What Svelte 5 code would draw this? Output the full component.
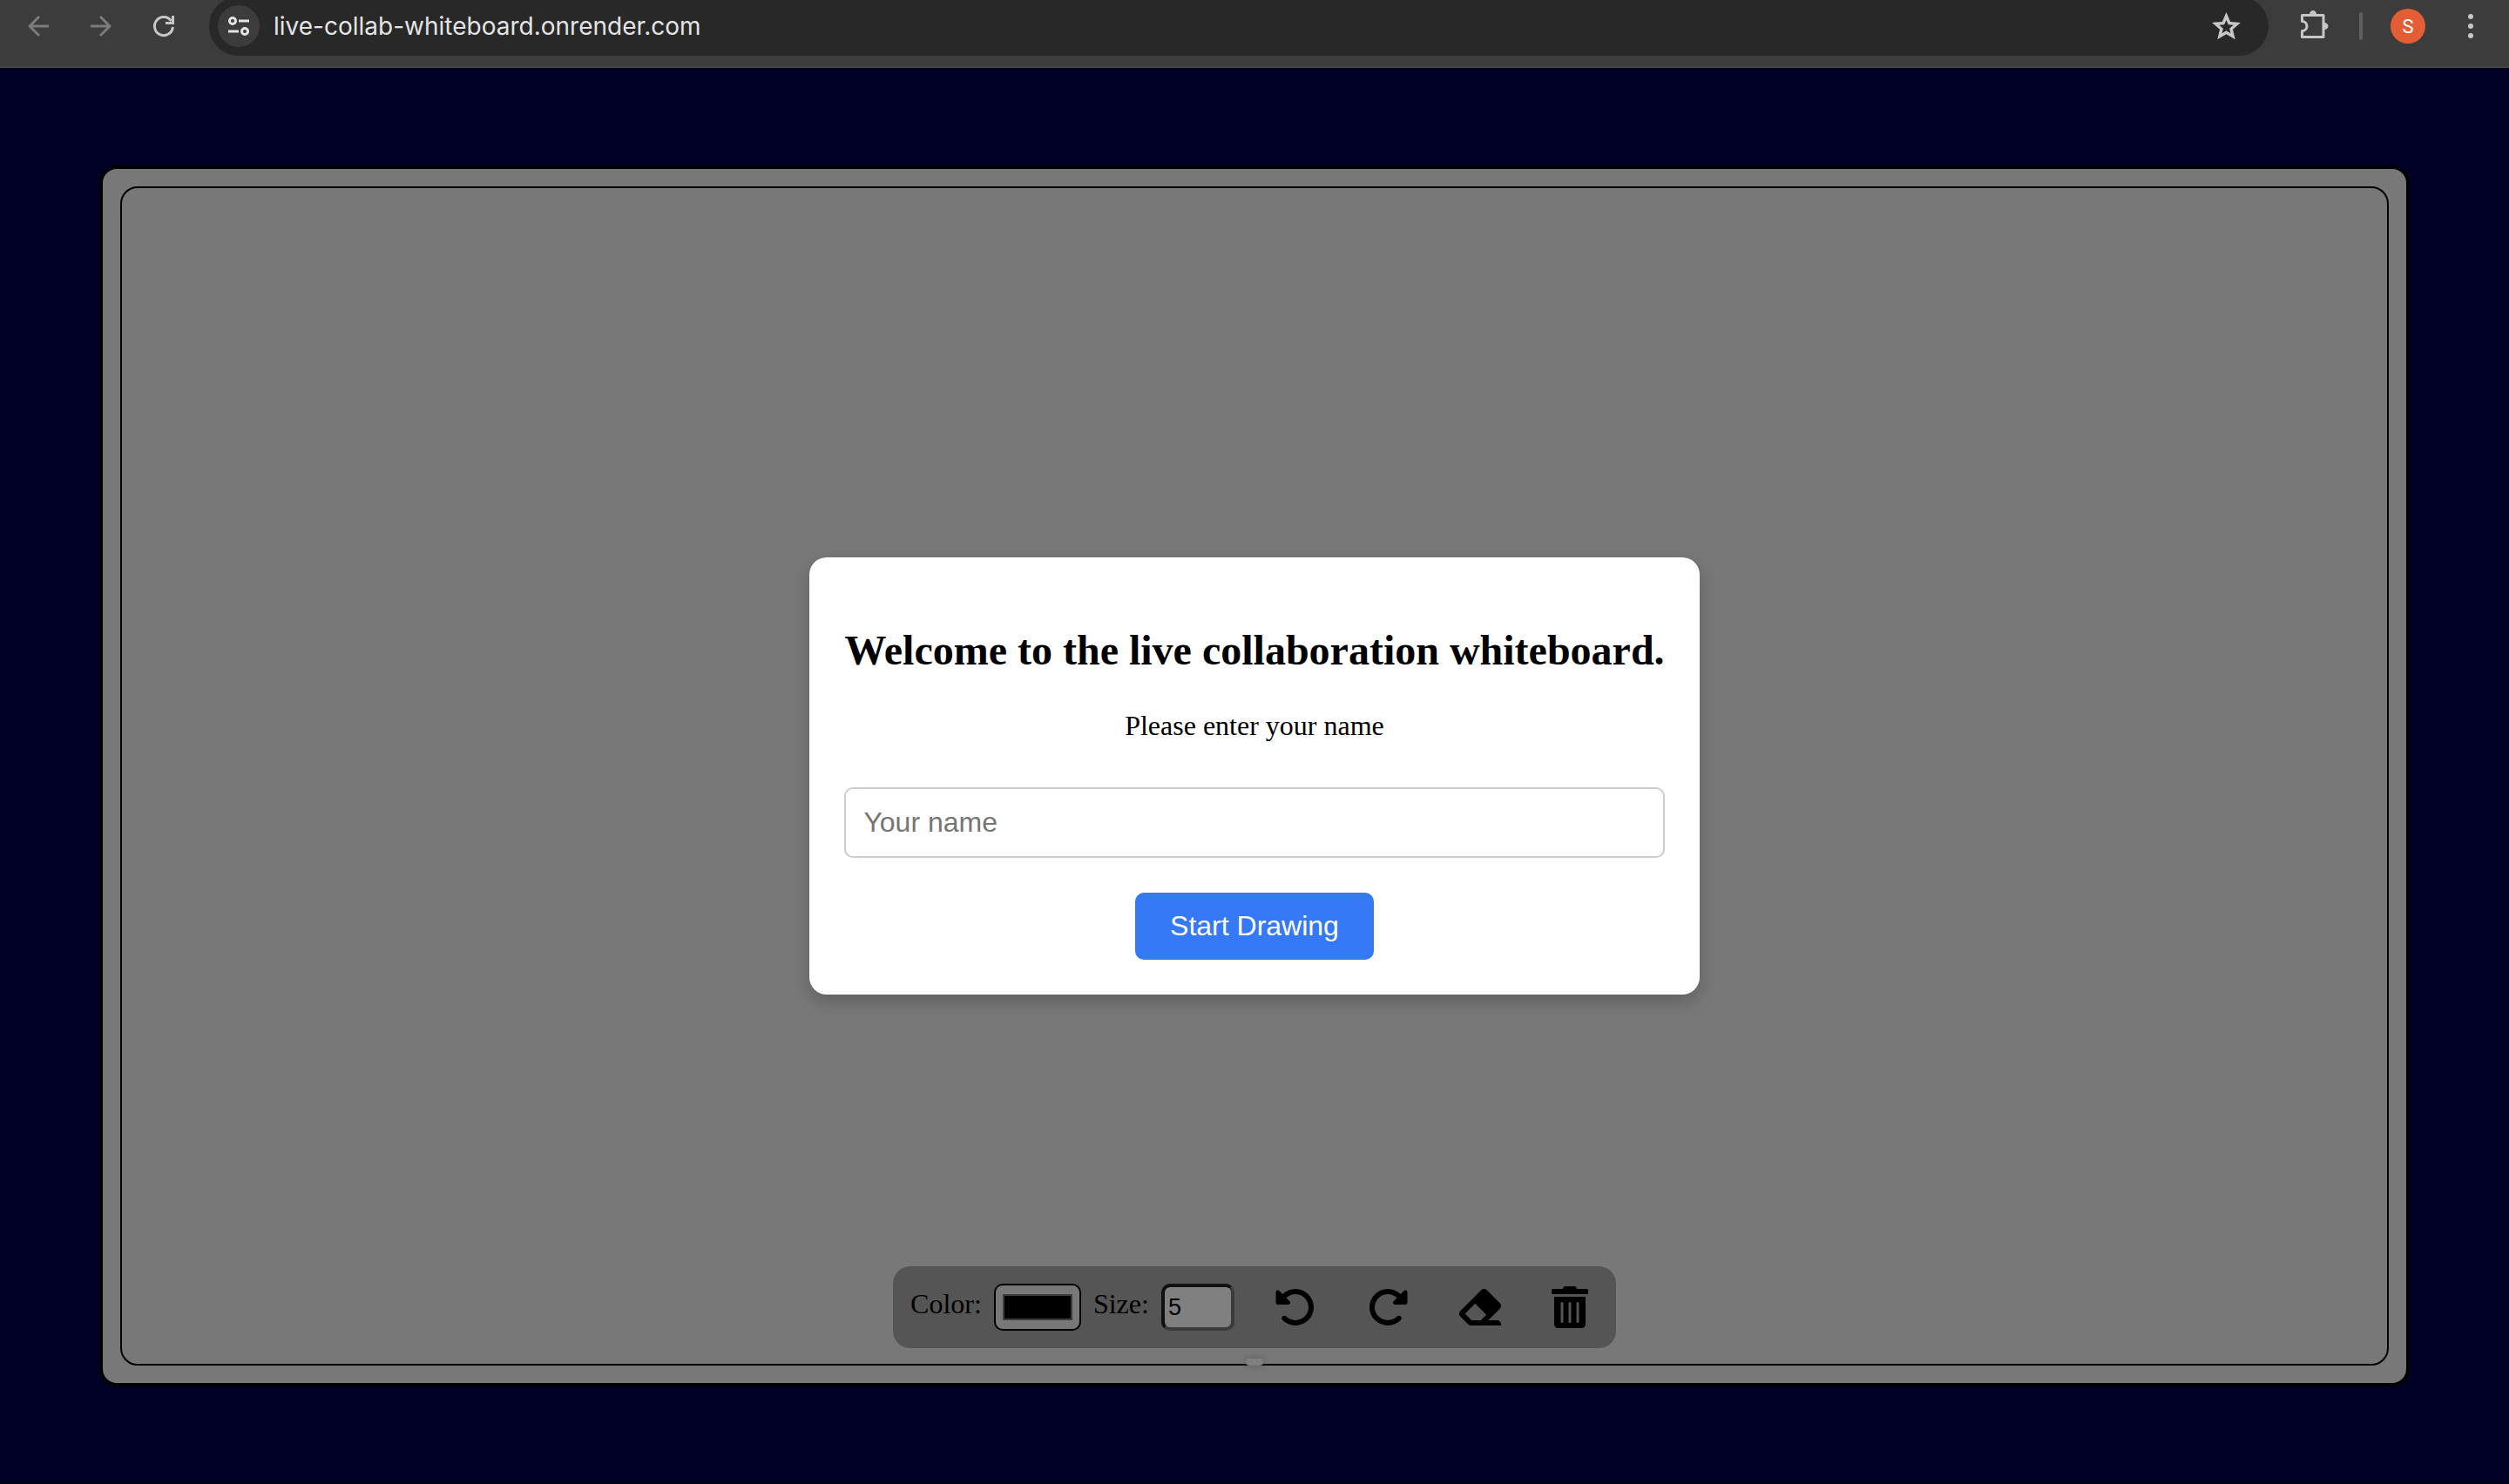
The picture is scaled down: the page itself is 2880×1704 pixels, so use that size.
<script lang="ts">
  let name = $state('');
  let color = $state('#000000');
  let size = $state(5);
</script>

<div class="window">
  <header class="chrome">
    <nav class="nav" aria-label="Browser navigation">
      <button class="tool dim" aria-label="Back">
        <svg viewBox="0 0 24 24"><path d="M24 12H2M13 1L2 12l11 11" /></svg>
      </button>
      <button class="tool dim" aria-label="Forward">
        <svg viewBox="0 0 24 24"><path d="M0 12h22M11 1l11 11-11 11" /></svg>
      </button>
      <button class="tool" aria-label="Reload">
        <svg viewBox="0 0 24 24"><path d="M22.400 13A10.500 10.500 0 1 1 20.500 6" /><path class="solid" d="M24 0v10H14V7h7V0z" /></svg>
      </button>
    </nav>
    <div class="address">
      <button class="site" aria-label="Site information">
        <svg viewBox="0 0 24 22"><circle cx="5" cy="5" r="3.500" /><path d="M12 5h12M0 17h12" /><circle cx="19" cy="17" r="3.500" /></svg>
      </button>
      <input class="url" aria-label="Address" value="live-collab-whiteboard.onrender.com" />
      <button class="star" aria-label="Bookmark">
        <svg viewBox="2 2 20 20"><path class="solid" fill-rule="evenodd" d="M22 9.240l-7.190-.620L12 2 9.190 8.630 2 9.240l5.460 4.730L5.820 21 12 17.270 18.180 21l-1.630-7.030L22 9.240zM12 14.900l-3 1.800.8-3.400-2.700-2.300 3.500-.300L12 7.400l1.400 3.300 3.500.300-2.700 2.300.8 3.400z" /></svg>
      </button>
    </div>
    <button class="puzzle" aria-label="Extensions">
      <svg viewBox="0 0 34 34"><path d="M2.500 4.500h24.500v25H2.500v-7a5.500 5.500 0 0 0 0-11z" /><path class="solid" d="M11 3.500a4 4.500 0 0 1 8 0zM28 13a4.500 4 0 0 1 0 8z" /></svg>
    </button>
    <span class="divider"></span>
    <button class="avatar" aria-label="Profile">S</button>
    <button class="more" aria-label="Menu">
      <svg viewBox="0 0 6 28"><circle cx="3" cy="3" r="3" /><circle cx="3" cy="14" r="3" /><circle cx="3" cy="25" r="3" /></svg>
    </button>
  </header>

  <main class="page">
    <section class="board">
      <div class="canvas">
        <div class="toolbar">
          <label for="color">Color:</label>
          <input id="color" class="color" type="color" bind:value={color} />
          <label for="size">Size:</label>
          <input id="size" class="size" type="number" min="1" bind:value={size} />
          <div class="actions">
            <button aria-label="Undo">
              <svg viewBox="0 0 512 512"><path d="M48.500 224H40c-13.300 0-24-10.700-24-24V72c0-9.700 5.800-18.500 14.800-22.200s19.300-1.700 26.200 5.200L98.600 96.600c87.600-86.500 228.700-86.200 315.800 1c87.500 87.500 87.500 229.300 0 316.800s-229.300 87.500-316.800 0c-12.500-12.500-12.500-32.800 0-45.300s32.800-12.500 45.300 0c62.500 62.500 163.800 62.500 226.300 0s62.500-163.800 0-226.300c-62.200-62.200-162.700-62.500-225.300-1L185 183c6.900 6.900 8.900 17.200 5.200 26.200s-12.500 14.800-22.200 14.800H48.500z" /></svg>
            </button>
            <button aria-label="Redo">
              <svg viewBox="0 0 512 512"><path d="M463.500 224H472c13.300 0 24-10.700 24-24V72c0-9.700-5.800-18.500-14.800-22.200s-19.300-1.700-26.200 5.200L413.400 96.600c-87.600-86.500-228.700-86.200-315.800 1c-87.500 87.500-87.500 229.300 0 316.800s229.300 87.500 316.800 0c12.500-12.500 12.500-32.800 0-45.300s-32.800-12.500-45.300 0c-62.500 62.500-163.800 62.500-226.300 0s-62.500-163.800 0-226.300c62.200-62.200 162.700-62.500 225.300-1L327 183c-6.900 6.900-8.900 17.200-5.200 26.200s12.500 14.800 22.200 14.800H463.500z" /></svg>
            </button>
            <button aria-label="Eraser">
              <svg viewBox="0 0 512 512"><path d="M497.941 273.941c18.745-18.745 18.745-49.137 0-67.882l-160-160c-18.745-18.745-49.136-18.746-67.883 0l-256 256c-18.745 18.745-18.745 49.137 0 67.882l96 96A48.004 48.004 0 0 0 144 480h362a6 6 0 0 0 6-6v-10a48 48 0 0 0-48-48H355.883l142.058-142.059zm-302.627-62.627l137.373 137.373L265.373 416H150.628l-80-80 124.686-124.686z" /></svg>
            </button>
            <button aria-label="Clear board">
              <svg class="narrow" viewBox="0 0 448 512"><path d="M32 464a48 48 0 0 0 48 48h288a48 48 0 0 0 48-48V128H32zm272-256a16 16 0 0 1 32 0v224a16 16 0 0 1-32 0zm-96 0a16 16 0 0 1 32 0v224a16 16 0 0 1-32 0zm-96 0a16 16 0 0 1 32 0v224a16 16 0 0 1-32 0zM432 32H312l-9.400-18.700A24 24 0 0 0 281.100 0H166.800a23.720 23.720 0 0 0-21.400 13.300L136 32H16A16 16 0 0 0 0 48v32a16 16 0 0 0 16 16h416a16 16 0 0 0 16-16V48a16 16 0 0 0-16-16z" /></svg>
            </button>
          </div>
        </div>
        <div class="handle"></div>
      </div>
    </section>

    <form class="modal" onsubmit={(e) => e.preventDefault()}>
      <h2>Welcome to the live collaboration whiteboard.</h2>
      <label for="name">Please enter your name</label>
      <input id="name" type="text" placeholder="Your name" bind:value={name} />
      <button type="submit">Start Drawing</button>
    </form>
  </main>
</div>

<style>
  :global(body) {
    margin: 0;
    background: #000026;
  }

  .window {
    display: flex;
    flex-direction: column;
    min-height: 100vh;
    font-family: 'Liberation Serif', serif;
    font-size: 32px;
    color: #000;
  }

  button {
    margin: 0;
    padding: 0;
    border: 0;
    background: none;
    color: inherit;
    display: flex;
    align-items: center;
    justify-content: center;
  }

  input {
    box-sizing: border-box;
    margin: 0;
  }

  svg {
    display: block;
    overflow: visible;
  }

  /* Browser bar */
  .chrome {
    box-sizing: border-box;
    height: 78px;
    padding: 0 41px 16px 32px;
    border-bottom: 2px solid #474747;
    background: #3c3c3c;
    color: #c7c7c7;
    display: flex;
    align-items: center;
    overflow: hidden;
  }

  .chrome svg {
    fill: none;
    stroke: currentColor;
    stroke-width: 3;
    stroke-linejoin: round;
  }

  .chrome .solid {
    fill: currentColor;
    stroke: none;
  }

  .nav {
    display: flex;
    gap: 48px;
    margin-right: 40px;
  }

  .tool svg {
    width: 24px;
    height: 24px;
  }

  .dim {
    color: #7b7b7b;
  }

  .address {
    box-sizing: border-box;
    flex: 1;
    height: 68px;
    padding: 0 32px 0 10px;
    border-radius: 34px;
    background: #282828;
    display: flex;
    align-items: center;
  }

  .site {
    width: 48px;
    height: 48px;
    border-radius: 50%;
    background: #3c3c3c;
    color: #e3e3e3;
  }

  .site svg {
    width: 24px;
    height: 22px;
  }

  .url {
    flex: 1;
    min-width: 0;
    padding: 0 0 0 16px;
    border: 0;
    outline: 0;
    background: none;
    color: #e3e3e3;
    font-family: Inter, sans-serif;
    font-size: 28px;
  }

  .star svg {
    width: 33px;
    height: 33px;
  }

  .puzzle {
    margin-left: 36px;
  }

  .puzzle svg {
    width: 34px;
    height: 34px;
  }

  .divider {
    width: 4px;
    height: 32px;
    margin: 0 32px 0 34px;
    border-radius: 2px;
    background: #5e5e5e;
  }

  .avatar {
    width: 40px;
    height: 40px;
    border-radius: 50%;
    background: #e35e34;
    color: #fff;
    font-family: Roboto, sans-serif;
    font-size: 22px;
  }

  .more {
    margin-left: 49px;
  }

  .more svg {
    width: 6px;
    height: 28px;
    fill: currentColor;
    stroke: none;
  }

  /* Board */
  .page {
    flex: 1;
    display: grid;
    padding: 112px 114px 110px;
    border-bottom: 2px solid #000014;
    background: #000026;
  }

  .board,
  .modal {
    grid-area: 1 / 1;
  }

  .board {
    display: flex;
    padding: 20px;
    border: 4px solid #000;
    border-radius: 20px;
    background: #787878;
  }

  .canvas {
    flex: 1;
    position: relative;
    border: 2px solid #000;
    border-radius: 20px;
    display: flex;
    align-items: flex-end;
    justify-content: center;
    padding-bottom: 18px;
  }

  .toolbar {
    display: flex;
    align-items: center;
    padding: 20px 32px 20px 20px;
    border-radius: 20px;
    background: #555;
  }

  .toolbar label {
    padding-bottom: 8px;
  }

  .color {
    width: 100px;
    height: 54px;
    margin: 0 14px;
    padding: 10px 8px;
    border: 2px solid #000;
    border-radius: 10px;
    background: #787878;
  }

  .color::-webkit-color-swatch-wrapper {
    padding: 0;
  }

  .color::-webkit-color-swatch {
    border: 2px solid #3c3c3c;
    border-radius: 0;
  }

  .size {
    width: 84px;
    height: 54px;
    margin-left: 14px;
    padding: 0 4px;
    border: 4px solid;
    border-color: #111 #3b3b3b #3b3b3b #111;
    border-radius: 10px;
    background: #808080;
    color: #000;
    font-family: 'Liberation Sans', sans-serif;
    font-size: 27px;
  }

  .actions {
    display: flex;
    gap: 58px;
    margin-left: 46px;
  }

  .actions svg {
    width: 48px;
    height: 48px;
  }

  .actions .narrow {
    width: 42px;
  }

  .handle {
    position: absolute;
    bottom: -2px;
    left: 50%;
    width: 20px;
    height: 8px;
    margin-left: -10px;
    border-radius: 4px;
    background: #808080;
    box-shadow: 0 0 10px rgba(0, 0, 0, 0.25);
  }

  /* Welcome dialog */
  .modal {
    place-self: center;
    position: relative;
    display: flex;
    flex-direction: column;
    align-items: center;
    padding: 40px;
    border-radius: 20px;
    background: #fff;
    box-shadow: 0 8px 20px rgba(0, 0, 0, 0.2);
  }

  .modal h2 {
    margin: 40px 0;
    font-size: 48px;
    line-height: 54px;
  }

  .modal label {
    line-height: 38px;
  }

  .modal input {
    width: 100%;
    height: 81px;
    margin: 52px 0 40px;
    padding: 0 20px;
    border: 2px solid #ccc;
    border-radius: 10px;
    background: #fff;
    font-family: 'Liberation Sans', sans-serif;
    font-size: 32px;
  }

  .modal input::placeholder {
    color: #757575;
  }

  .modal button {
    height: 77px;
    padding: 0 40px;
    border-radius: 10px;
    background: #3579f6;
    color: #fff;
    font-family: 'Liberation Sans', sans-serif;
    font-size: 32px;
  }
</style>
